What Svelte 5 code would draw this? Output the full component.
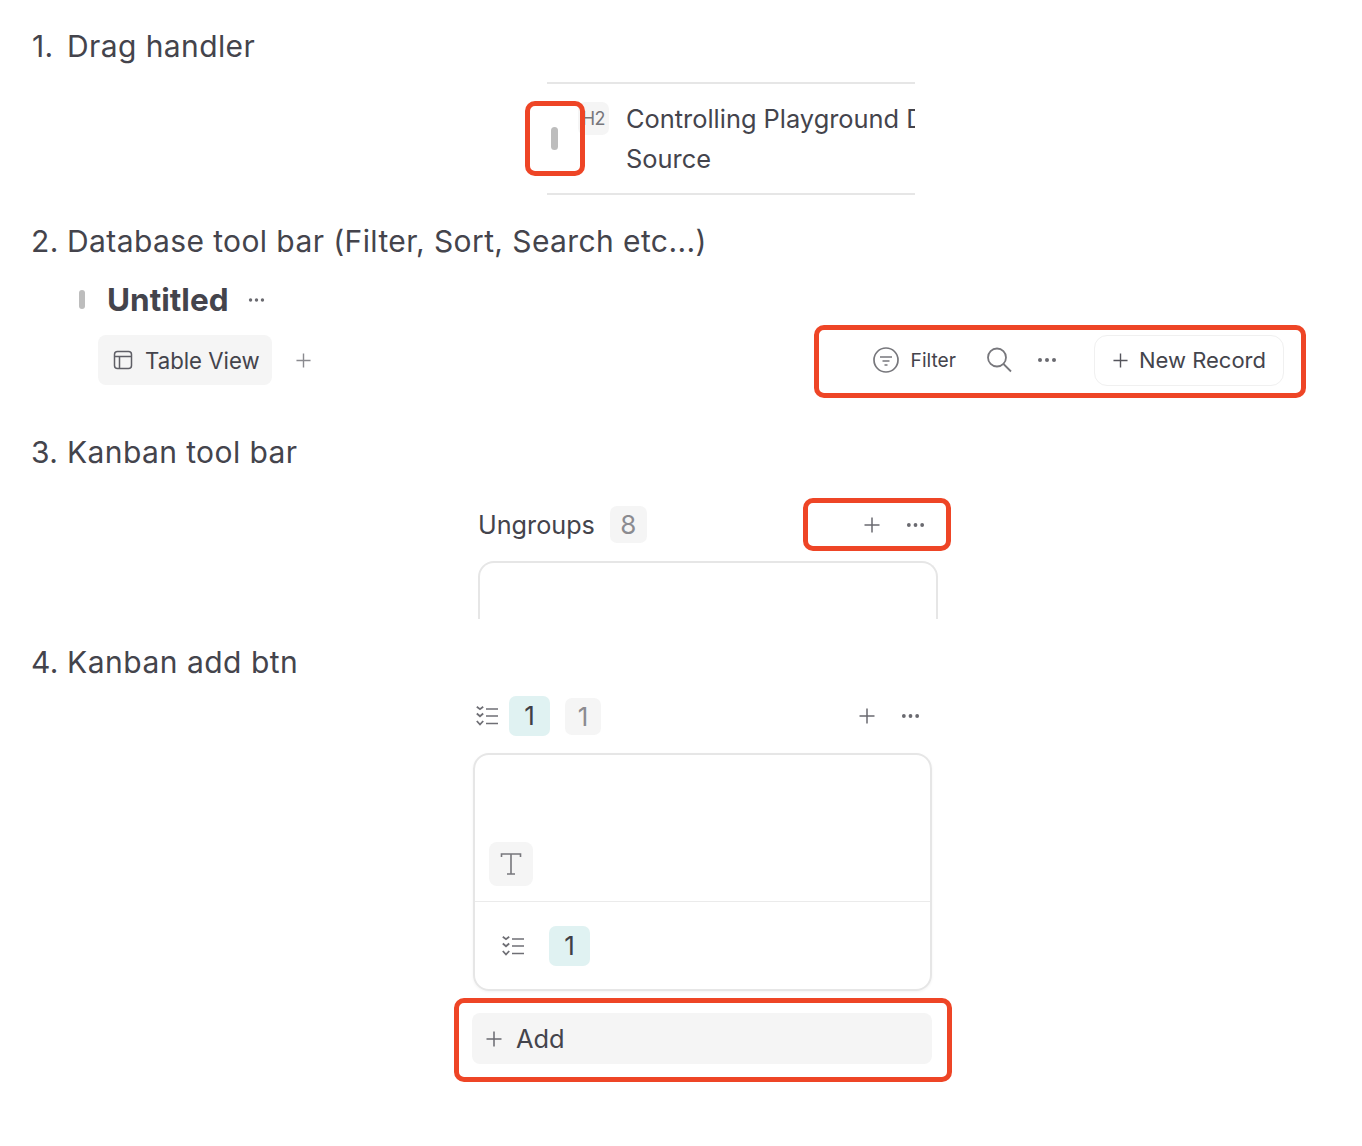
<script>
  const dots = [3, 10, 17];
</script>

{#snippet plus(size)}
  <svg class="ico" width={size} height={size} viewBox="0 0 16 16" fill="none" stroke="currentColor" stroke-width="1.500"><path d="M8 .5v15M.5 8h15"/></svg>
{/snippet}
{#snippet more(w)}
  <svg class="ico" width={w} height="6" viewBox="0 0 20 6" fill="currentColor">{#each dots as x}<circle cx={x} cy="3" r="2"/>{/each}</svg>
{/snippet}
{#snippet tasks()}
  <svg class="ico" width="22" height="20" viewBox="0 0 22 20" fill="none" stroke="#6f6f75" stroke-width="1.600"><path d="M10 3h12M10 10h12M10 17.500h12"/><path d="M.8 .8l3.200 2.400 3.200-2.400M.8 7.500l3.200 2.800 3.200-2.800M.8 15l3.200 3.500 3.200-3.500" stroke-width="1.800"/></svg>
{/snippet}

<main class="page">
  <h2 class="first"><span class="num">1.</span>Drag handler</h2>
  <section class="demo-heading">
    <span class="handle tall"></span>
    <span class="h2-tag">H2</span>
    <div class="clip">Controlling Playground Data<br />Source</div>
    <span class="mark mark-a"></span>
  </section>

  <h2 class="second"><span class="num">2.</span>Database tool bar (Filter, Sort, Search etc...)</h2>
  <section class="demo-db">
    <div class="title-row">
      <span class="handle short"></span>
      <strong>Untitled</strong>
      <span class="title-more">{@render more(17)}</span>
    </div>
    <div class="tool-row">
      <div class="tab">
        <svg class="ico" width="20" height="20" viewBox="0 0 20 20" fill="none" stroke="#5f5f66" stroke-width="1.500"><rect x="1.500" y="1.500" width="17" height="17" rx="3"/><path d="M1.500 6.500h17M6.500 6.500v12"/></svg>
        <span>Table View</span>
      </div>
      <span class="tab-add">{@render plus(15)}</span>
      <div class="actions">
        <svg class="ico" width="26" height="26" viewBox="0 0 26 26" fill="none" stroke="#77777c" stroke-width="1.700"><circle cx="13" cy="13" r="12"/><path d="M7 10h12M9.500 14h7M11.500 18h3"/></svg>
        <span class="filter">Filter</span>
        <svg class="ico search" width="26" height="26" viewBox="0 0 26 26" fill="none" stroke="#77777c" stroke-width="1.800"><circle cx="11" cy="10.500" r="9"/><path d="M17.500 17l7.500 7.500"/></svg>
        <span class="act-more">{@render more(22)}</span>
        <div class="new-record">
          <span class="np">{@render plus(15)}</span>
          <span>New Record</span>
        </div>
      </div>
      <span class="mark mark-b"></span>
    </div>
  </section>

  <h2 class="third"><span class="num">3.</span>Kanban tool bar</h2>
  <section class="demo-kanban">
    <div class="col-head">
      <span class="col-name">Ungroups</span>
      <span class="count">8</span>
      <span class="col-actions">
        <span class="p">{@render plus(16)}</span>
        {@render more(19)}
      </span>
      <span class="mark mark-c"></span>
    </div>
    <div class="card-top"></div>
  </section>

  <h2 class="fourth"><span class="num">4.</span>Kanban add btn</h2>
  <section class="demo-add">
    <div class="col-head2">
      {@render tasks()}
      <span class="teal">1</span>
      <span class="count small">1</span>
      <span class="col-actions">
        <span class="p">{@render plus(16)}</span>
        {@render more(19)}
      </span>
    </div>
    <div class="card">
      <div class="card-body">
        <span class="t-tile">
          <svg width="22" height="24" viewBox="0 0 22 24" fill="none" stroke="#77777c" stroke-width="1.600"><path d="M1.500 5V2h19v3M11 2v20M7 22h8"/></svg>
        </span>
      </div>
      <div class="card-foot">
        {@render tasks()}
        <span class="teal">1</span>
      </div>
    </div>
    <div class="add">
      <span class="add-p">{@render plus(16)}</span>
      <span>Add</span>
    </div>
    <span class="mark mark-d"></span>
  </section>
</main>

<style>
  :global(body) { margin: 0; background: #fff; }
  .page {
    width: 1362px;
    height: 1146px;
    position: relative;
    overflow: hidden;
    font-family: Inter, "Liberation Sans", sans-serif;
    color: #44444c;
  }
  h2 {
    display: flex;
    margin: 27px 0 0 31px;
    height: 40px;
    font-size: 30px;
    line-height: 40px;
    font-weight: 400;
    letter-spacing: 0.4px;
    color: #44444c;
  }
  h2.first { margin-top: 26px; margin-left: 32px; }
  h2.first .num { width: 35px; }
  h2.second { margin-top: 26px; }
  h2.third { margin-top: 46px; }
  h2.fourth { margin-top: 23px; letter-spacing: 0.5px; }
  .num { flex: none; width: 36px; }
  .ico { display: block; flex: none; color: #6a6a70; }
  .mark {
    position: absolute;
    box-sizing: border-box;
    border: 5px solid #ee4526;
    border-radius: 10px;
    pointer-events: none;
  }

  .demo-heading {
    position: relative;
    box-sizing: border-box;
    margin: 16px 0 0 547px;
    width: 368px;
    height: 113px;
    border-top: 2px solid #e6e6e6;
    border-bottom: 2px solid #e6e6e6;
  }
  .handle { position: absolute; display: block; background: #bdbdbd; border-radius: 4px; }
  .handle.tall { left: 4px; top: 43px; width: 7px; height: 23px; }
  .h2-tag {
    position: absolute;
    left: 31px;
    top: 18px;
    width: 31px;
    height: 33px;
    box-sizing: border-box;
    padding-right: 4px;
    background: #f5f5f5;
    border-radius: 7px;
    font-size: 18px;
    line-height: 33px;
    text-align: right;
    color: #77777c;
    letter-spacing: -0.5px;
  }
  .clip {
    position: absolute;
    left: 79px;
    right: 0;
    top: 15px;
    font-size: 25.400px;
    line-height: 40px;
    white-space: nowrap;
    overflow: hidden;
  }
  .mark-a { left: -22px; top: 17px; width: 60px; height: 75px; }

  .demo-db { margin-top: 19px; }
  .title-row { position: relative; display: flex; align-items: center; height: 40px; margin-left: 107px; }
  .handle.short { left: -28px; top: 10px; width: 6px; height: 19px; }
  .title-row strong { font-size: 31.500px; line-height: 40px; font-weight: 700; color: #44444c; }
  .title-more { margin-left: 19px; }
  .tool-row { position: relative; display: flex; align-items: center; height: 52px; margin: 14px 0 0 98px; width: 1186px; }
  .tab {
    box-sizing: border-box;
    display: flex;
    align-items: center;
    gap: 12px;
    width: 174px;
    height: 50px;
    padding-left: 15px;
    background: #f5f5f5;
    border-radius: 8px;
    font-size: 22.200px;
  }
  .tab-add { margin-left: 24px; }
  .tab-add :global(.ico) { color: #8a8a8f; }
  .actions { display: flex; align-items: center; margin-left: auto; }
  .filter { margin-left: 12px; font-size: 19.200px; }
  .search { margin-left: 30px; }
  .act-more { margin-left: 24px; }
  .new-record {
    box-sizing: border-box;
    display: flex;
    align-items: center;
    gap: 11px;
    width: 190px;
    height: 51px;
    margin-left: 36px;
    padding-left: 18px;
    border: 1.500px solid #f0f0f0;
    border-radius: 13px;
    font-size: 22px;
  }
  .np :global(.ico) { color: #55555c; }
  .mark-b { left: 716px; top: -9px; width: 492px; height: 73px; }

  .demo-kanban { position: relative; margin: 25px 0 0 478px; width: 460px; height: 122px; }
  .col-head { position: relative; display: flex; align-items: center; height: 55px; margin-bottom: 9px; }
  .col-name { font-size: 25.200px; }
  .count {
    box-sizing: border-box;
    display: block;
    width: 37px;
    height: 37px;
    margin-left: 15px;
    background: #f5f5f5;
    border-radius: 7px;
    font-size: 26px;
    line-height: 37px;
    text-align: center;
    color: #8b8b90;
  }
  .col-actions { display: flex; align-items: center; margin-left: auto; margin-right: 13px; }
  .p { margin-right: 26px; }
  .mark-c { left: 325px; top: 1px; width: 148px; height: 53px; }
  .card-top {
    box-sizing: border-box;
    height: 58px;
    border: 2px solid #e6e6e6;
    border-bottom: 0;
    border-radius: 16px 16px 0 0;
  }

  .demo-add { position: relative; margin: 14px 0 0 472px; width: 460px; }
  .col-head2 { display: flex; align-items: center; height: 40px; padding-left: 4px; }
  .teal {
    display: block;
    width: 41px;
    height: 40px;
    background: #e0f2f2;
    border-radius: 7px;
    font-size: 26px;
    line-height: 40px;
    text-align: center;
    color: #3f3f46;
  }
  .col-head2 .teal { margin-left: 11px; }
  .count.small { width: 36px; }
  .col-head2 .col-actions { margin-right: 12px; }
  .card {
    box-sizing: border-box;
    width: 459px;
    height: 238px;
    margin: 17px 0 0 1px;
    border: 2px solid #e6e6e6;
    border-radius: 16px;
    box-shadow: 0 1px 3px rgba(0, 0, 0, 0.05);
  }
  .card-body { box-sizing: border-box; height: 147px; padding: 87px 0 0 14px; border-bottom: 1.500px solid #ebebeb; }
  .t-tile {
    display: flex;
    align-items: center;
    justify-content: center;
    width: 44px;
    height: 44px;
    background: #f5f5f5;
    border-radius: 8px;
  }
  .card-foot { display: flex; align-items: center; height: 87px; padding-left: 27px; }
  .card-foot .teal { margin-left: 25px; }
  .add {
    box-sizing: border-box;
    display: flex;
    align-items: center;
    gap: 14px;
    height: 51px;
    margin-top: 22px;
    padding-left: 14px;
    background: #f5f5f5;
    border-radius: 8px;
    font-size: 25.400px;
  }
  .mark-d { left: -18px; bottom: -18px; width: 498px; height: 84px; }
</style>
